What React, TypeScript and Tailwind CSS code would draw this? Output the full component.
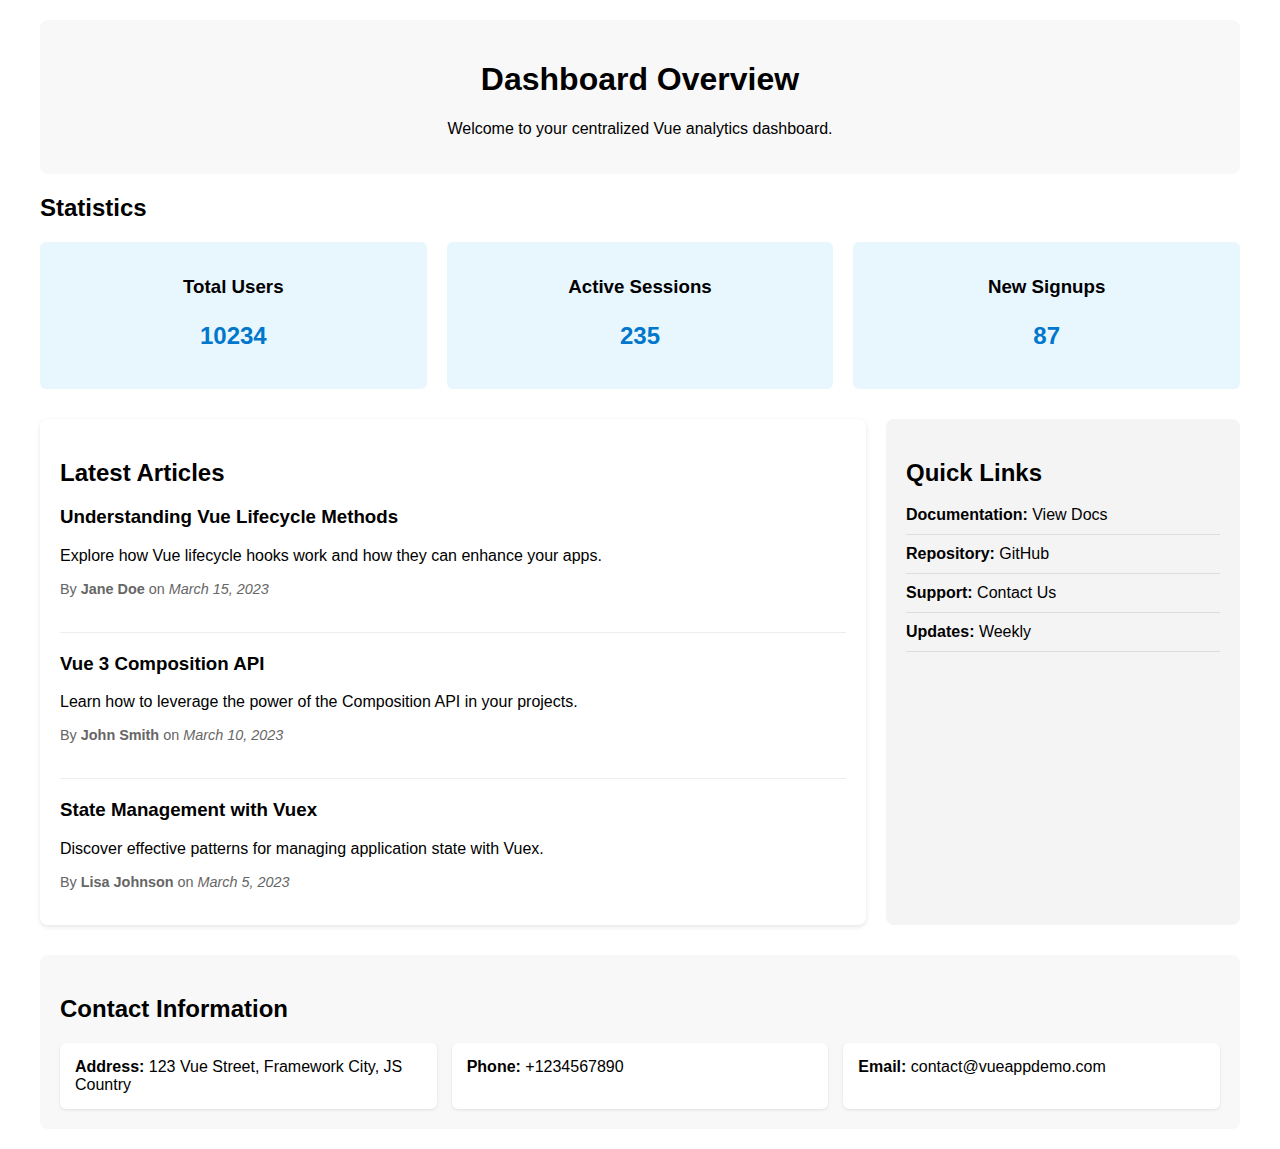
const stats = [
  { label: 'Total Users', value: 10234 },
  { label: 'Active Sessions', value: 235 },
  { label: 'New Signups', value: 87 },
];

const articles = [
  {
    title: 'Understanding Vue Lifecycle Methods',
    summary: 'Explore how Vue lifecycle hooks work and how they can enhance your apps.',
    author: 'Jane Doe',
    date: 'March 15, 2023',
  },
  {
    title: 'Vue 3 Composition API',
    summary: 'Learn how to leverage the power of the Composition API in your projects.',
    author: 'John Smith',
    date: 'March 10, 2023',
  },
  {
    title: 'State Management with Vuex',
    summary: 'Discover effective patterns for managing application state with Vuex.',
    author: 'Lisa Johnson',
    date: 'March 5, 2023',
  },
];

const links = [
  { label: 'Documentation:', value: 'View Docs' },
  { label: 'Repository:', value: 'GitHub' },
  { label: 'Support:', value: 'Contact Us' },
  { label: 'Updates:', value: 'Weekly' },
];

const contacts = [
  { label: 'Address:', value: '123 Vue Street, Framework City, JS Country' },
  { label: 'Phone:', value: '+1234567890' },
  { label: 'Email:', value: 'contact@vueappdemo.com' },
];

const App = () => {
  return (
    <div className="min-h-screen bg-white px-10 py-5 text-[16px] leading-[normal] text-black font-['Liberation_Sans',Arial,sans-serif]">
      {/* header */}
      <header className="rounded-lg bg-[#f8f8f8] px-5 pt-5 pb-9 text-center">
        <h1 className="mt-[21.44px] mb-[21.44px] text-[32px] font-bold">Dashboard Overview</h1>
        <p>Welcome to your centralized Vue analytics dashboard.</p>
      </header>

      {/* stats */}
      <section>
        <h2 className="my-5 text-[24px] font-bold">Statistics</h2>
        <div className="grid grid-cols-3 gap-5">
          {stats.map((stat) => (
            <div key={stat.label} className="rounded-md bg-[#e8f6fe] p-[15px] text-center">
              <h3 className="mt-[18.72px] text-[18.72px] font-bold">{stat.label}</h3>
              <p className="my-6 text-[24px] font-bold text-[#0077cc]">{stat.value}</p>
            </div>
          ))}
        </div>
      </section>

      {/* main */}
      <div className="mt-[30px] grid grid-cols-[7fr_3fr] gap-5">
        <section className="rounded-lg bg-white px-5 pt-5 pb-[21.5px] shadow-[0_2px_5px_rgba(0,0,0,0.1)]">
          <h2 className="mt-[19.92px] mb-2 text-[24px] font-bold">Latest Articles</h2>
          {articles.map((article, index) => {
            const isLast = index === articles.length - 1;
            return (
              <article
                key={article.title}
                className={isLast ? '' : 'border-b border-[#eee] pb-[20.5px]'}
              >
                <h3 className="mt-[19.72px] mb-[18.72px] text-[18.72px] font-bold">{article.title}</h3>
                <p className="mb-4">{article.summary}</p>
                <p className="mb-[14.4px] text-[14.4px] text-[#666]">
                  By <strong className="font-bold">{article.author}</strong> on <em className="italic">{article.date}</em>
                </p>
              </article>
            );
          })}
        </section>

        <aside className="rounded-lg bg-[#f4f4f4] p-5">
          <h2 className="mt-[19.92px] mb-[9px] text-[24px] font-bold">Quick Links</h2>
          <ul>
            {links.map((link) => (
              <li key={link.label} className="border-b border-[#ddd] py-[10px]">
                <strong className="font-bold">{link.label}</strong> {link.value}
              </li>
            ))}
          </ul>
        </aside>
      </div>

      {/* contact */}
      <section className="mt-[30px] rounded-lg bg-[#f8f8f8] p-5">
        <h2 className="mt-[19.92px] mb-5 text-[24px] font-bold">Contact Information</h2>
        <div className="grid grid-cols-3 gap-[15px]">
          {contacts.map((contact) => (
            <div key={contact.label} className="rounded-md bg-white p-[15px] shadow-[0_1px_3px_rgba(0,0,0,0.1)]">
              <p>
                <strong className="font-bold">{contact.label}</strong> {contact.value}
              </p>
            </div>
          ))}
        </div>
      </section>
    </div>
  );
};

export default App;
